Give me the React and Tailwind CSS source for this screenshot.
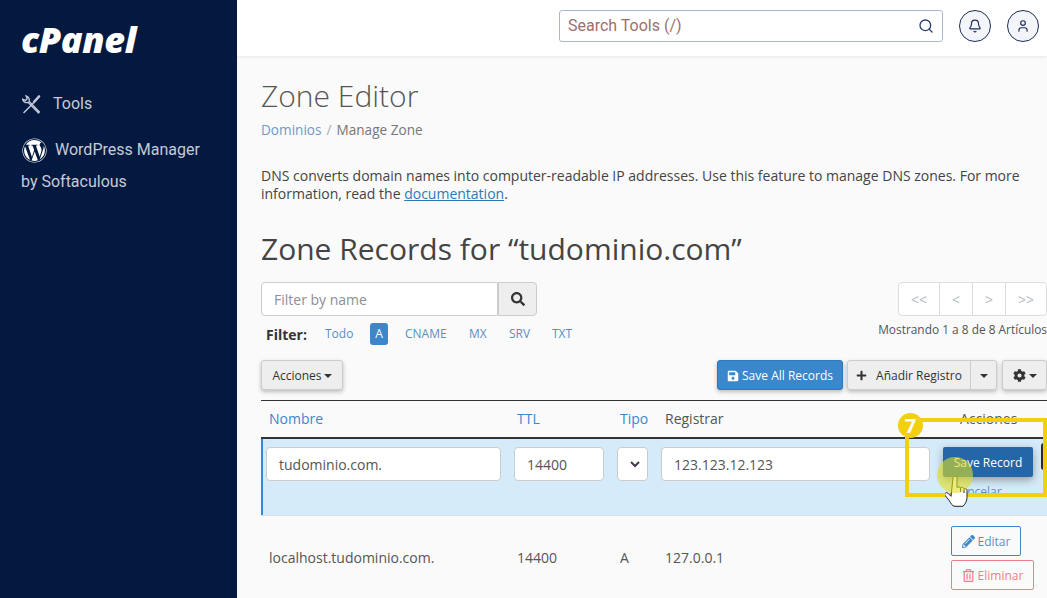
import React from 'react';
import { Bell, Search, User } from 'lucide-react';
import { FaWordpress, FaSave, FaSearch, FaPlus, FaCog, FaPencilAlt, FaRegTrashAlt } from 'react-icons/fa';

const ToolsIcon = () => (
    <svg width="20" height="20" viewBox="0 0 20 20" fill="none" stroke="#c5cbd8" strokeLinecap="round" className="shrink-0">
        <path d="M17.5 18L7 7.2c.7-2-.3-4.6-3-5.4l1.2 3-1.6 1.6-3-1.2c.6 2.8 3.4 3.9 5.4 3.1L16.5 19" strokeWidth="1.3" />
        <path d="M2 18.5l9-9" strokeWidth="1.5" />
        <path d="M12 8l5-5.5" strokeWidth="2.6" />
    </svg>
);

const HandCursor = () => (
    <svg width="24" height="34" viewBox="0 0 24 34" fill="#fff" stroke="#222" strokeWidth="1" className="absolute left-[708px] top-[475px]">
        <path d="M8 3c0-2 4-2 4 0v9.5c1-1 3-1 3.5.5 1-1 3-.8 3.5.8 1-.6 3-.2 3 1.5v7c0 4-2 7-4 9h-8c-3 0-4-3-6-6l-4-5c-1-2 1-3.5 3-2l3 3z" />
        <path d="M15.5 13v4M19 14v4" fill="none" />
    </svg>
);

const Sidebar = () => (
    <aside className="w-[237px] shrink-0 bg-[#04193f] pl-[22px] font-['Roboto',sans-serif] text-[16px] text-[#c5cbd8]">
        <div className="pt-[18px] h-[72px] -ml-px font-['Open_Sans',sans-serif] text-[36px] leading-[44px] font-extrabold italic tracking-[-0.4px] text-white">cPanel</div>
        <div className="mt-[20px] flex items-center gap-[11px] h-6">
            <ToolsIcon />
            <span>Tools</span>
        </div>
        <div className="mt-[22px] flex items-center gap-2 h-6">
            <FaWordpress className="text-white text-[25px] shrink-0" />
            <span>WordPress Manager</span>
        </div>
        <div className="mt-2 -ml-px leading-6">by Softaculous</div>
    </aside>
);

const TopBar = () => (
    <header className="h-[56px] bg-white shadow-[0_1px_3px_rgba(0,0,0,0.08)] flex items-center justify-end gap-[16px] pr-[8px] pb-[4px] shrink-0 relative">
        <div className="w-[384px] h-[32px] border border-[#a9b7d1] rounded-[3px] flex items-center justify-between pl-2 pr-[8px] font-['Roboto',sans-serif] text-[16px] text-[#9c6f6f]">
            <span>Search Tools (/)</span>
            <Search className="w-[16px] h-[16px] text-[#2b3f6b]" strokeWidth={2} />
        </div>
        <button className="w-8 h-8 rounded-full border border-[#1c2e5a] bg-[#f3f5fb] flex items-center justify-center">
            <Bell className="w-[14px] h-[14px] text-[#1c2e5a]" />
        </button>
        <button className="w-8 h-8 rounded-full border border-[#1c2e5a] bg-[#f3f5fb] flex items-center justify-center">
            <User className="w-[14px] h-[14px] text-[#1c2e5a]" />
        </button>
    </header>
);

const FilterBar = () => (
    <div className="flex justify-between mt-[12px]">
        <div>
            <div className="flex w-[276px] h-[34px]">
                <div className="flex-1 bg-white border border-[#ccc] rounded-l-[4px] pl-3 leading-[34px] text-[14px] text-[#8e8e93]">Filter by name</div>
                <div className="w-[39px] bg-[#eee] border border-l-[#ccc] border-[#ccc] rounded-r-[4px] flex items-center justify-center">
                    <FaSearch className="text-[14px] text-[#333]" />
                </div>
            </div>
            <div className="flex items-center h-[24px] mt-[6px] pl-[5px] text-[12px] text-[#5a8fc4]">
                <b className="text-[14px] text-[#333] w-[59px]">Filter:</b>
                <span className="w-[45px]">Todo</span>
                <span className="w-[18px] h-[22px] bg-[#3a87cc] text-white rounded-[3px] flex items-center justify-center mr-[17px]">A</span>
                <span className="w-[64px]">CNAME</span>
                <span className="w-[40px]">MX</span>
                <span className="w-[43px]">SRV</span>
                <span>TXT</span>
            </div>
        </div>
        <div className="flex flex-col items-end">
            <div className="flex h-[34px] bg-white border border-[#ddd] rounded-[4px] text-[14px] text-[#b4b9c6] divide-x divide-[#ddd]">
                <span className="w-[41px] flex items-center justify-center">&lt;&lt;</span>
                <span className="w-[33px] flex items-center justify-center">&lt;</span>
                <span className="w-[33px] flex items-center justify-center">&gt;</span>
                <span className="w-[40px] flex items-center justify-center">&gt;&gt;</span>
            </div>
            <div className="mt-[3px] text-[11.9px] leading-[20px] text-[#555] whitespace-nowrap">Mostrando 1 a 8 de 8 Artículos</div>
        </div>
    </div>
);

const ActionsBar = () => (
    <div className="flex justify-between mt-[14px] text-[12px] h-[30px]">
        <button className="w-[82px] pt-px bg-[#eee] border border-[#ccc] rounded-[3px] text-[#333] shadow-[0_2px_4px_rgba(0,0,0,0.25)] flex items-center justify-center gap-[2px]">
            Acciones <span className="border-x-[4px] border-x-transparent border-t-[4px] border-t-[#333]" />
        </button>
        <div className="flex">
            <button className="w-[126px] pt-px bg-[#3a87cc] border border-[#2f78bb] rounded-[3px] text-white shadow-[0_2px_4px_rgba(0,0,0,0.25)] flex items-center justify-center gap-[3px]">
                <FaSave className="text-[12px]" /> Save All Records
            </button>
            <div className="ml-[4px] flex bg-[#eee] border border-[#ccc] rounded-[3px] text-[#333] shadow-[0_2px_4px_rgba(0,0,0,0.25)]">
                <span className="w-[123px] pt-px flex items-center justify-center gap-[9px] border-r border-[#ccc]"><FaPlus className="text-[11px]" /> Añadir Registro</span>
                <span className="w-[25px] pt-px flex items-center justify-center"><span className="border-x-[4px] border-x-transparent border-t-[4px] border-t-[#333]" /></span>
            </div>
            <button className="ml-[5px] w-[45px] pt-px bg-[#eee] border border-[#ccc] rounded-[3px] text-[#333] shadow-[0_2px_4px_rgba(0,0,0,0.25)] flex items-center justify-center gap-[3px]">
                <FaCog className="text-[13px]" /><span className="border-x-[4px] border-x-transparent border-t-[4px] border-t-[#333]" />
            </button>
        </div>
    </div>
);

const fieldClass = "h-[34px] bg-white border border-[#ccc] rounded-[4px] text-[14px] leading-[34px] text-[#555]";
const gridClass = "grid grid-cols-[248px_103px_44px_279px_1fr]";

const RecordsTable = () => (
    <div className="mt-[10px] text-[14px]">
        <div className={`${gridClass} h-[39px] pb-[2px] border-t border-[#333] border-b-2 border-b-[#333] items-center`}>
            <span className="pl-2 text-[#3a87cc]">Nombre</span>
            <span className="pl-2 text-[#3a87cc]">TTL</span>
            <span className="pl-2 text-[#3a87cc]">Tipo</span>
            <span className="pl-[9px] text-[#555]">Registrar</span>
            <span className="pl-[25px] text-[#555]">Acciones</span>
        </div>
        <div className={`${gridClass} h-[77px] bg-[#d6ebf9] border-b border-[#d9dee2] shadow-[inset_2px_0_0_#3a87cc] pt-[8px]`}>
            <div className="pl-[5px]"><div className={`${fieldClass} w-[235px] pl-3`}>tudominio.com.</div></div>
            <div className="pl-[5px]"><div className={`${fieldClass} w-[90px] pl-3`}>14400</div></div>
            <div className="pl-[5px]">
                <div className={`${fieldClass} w-[31px] flex items-center justify-end pr-[7px]`}>
                    <svg width="10" height="7" viewBox="0 0 10 7" fill="none" stroke="#4a3550" strokeWidth="2"><path d="M1 1l4 4 4-4" /></svg>
                </div>
            </div>
            <div className="pl-[5px]"><div className={`${fieldClass} w-[269px] pl-3`}>123.123.12.123</div></div>
            <div className="pl-[8px] relative">
                <div className="w-[90px] h-[30px] bg-[#2566a8] rounded-[2px] text-white text-[12px] leading-[32px] text-center shadow-[0_3px_8px_rgba(0,0,0,0.35)]">Save Record</div>
                <div className="pl-[10px] mt-[5px] text-[12px] leading-[20px] text-[#5a8fc4]">Cancelar</div>
                <div className="absolute left-[106px] top-[-4px] w-[12px] h-[27px] bg-[#2b2b33] rounded-[3px]" />
            </div>
        </div>
        <div className={`${gridClass} h-[82px] items-center text-[#555]`}>
            <span className="pl-2">localhost.tudominio.com.</span>
            <span className="pl-2">14400</span>
            <span className="pl-2">A</span>
            <span className="pl-[9px]">127.0.0.1</span>
            <div className="pl-[16px] pt-[2px] text-[12px] flex flex-col gap-[4px] items-start">
                <span className="w-[70px] h-[30px] pt-px border border-[#3a87cc] rounded-[2px] text-[#5a8fc4] flex items-center justify-center gap-[3px]"><FaPencilAlt className="text-[13px] text-[#3a87cc]" /> Editar</span>
                <span className="w-[83px] h-[30px] pt-px border border-[#e9808d] rounded-[2px] text-[#e9808d] flex items-center justify-center gap-[3px]"><FaRegTrashAlt className="text-[13px]" /> Eliminar</span>
            </div>
        </div>
    </div>
);

const Callout = () => (
    <>
        <div className="absolute left-[668px] top-[418px] w-[142px] h-[79px] border-4 border-[#f2cf0f]" />
        <div className="absolute left-[661px] top-[413px] w-[25px] h-[25px] rounded-full bg-[#f2cf0f] text-white font-bold text-[20px] leading-[25px] text-center">7</div>
        <HandCursor />
        <div className="absolute left-[700px] top-[457px] w-[36px] h-[36px] rounded-full bg-[#e0e020]/60" />
    </>
);

export default function App() {
    return (
        <div className="flex w-[1047px] h-[598px] overflow-hidden bg-[#fafafa] font-['Open_Sans',sans-serif]">
            <Sidebar />
            <div className="flex-1 flex flex-col relative min-w-0">
                <TopBar />
                <main className="pl-[24px] flex-1 min-w-0">
                    <h1 className="mt-[19px] text-[30px] leading-[42px] text-[#555] font-light">Zone Editor</h1>
                    <div className="mt-[3px] text-[13.6px] leading-[20px] text-[#777]">
                        <span className="text-[#6c9cc9]">Dominios</span>
                        <span className="text-[#aaa] px-[5px]">/</span>
                        Manage Zone
                    </div>
                    <p className="mt-[27px] text-[14px] leading-[18px] text-[#444]">
                        DNS converts domain names into computer-readable IP addresses. Use this feature to manage DNS zones. For more information, read the <span className="text-[#2a7ab8] underline">documentation</span>.
                    </p>
                    <h2 className="mt-[25px] text-[30px] leading-[42px] text-[#444]">Zone Records for “tudominio.com”</h2>
                    <FilterBar />
                    <ActionsBar />
                    <RecordsTable />
                </main>
                <Callout />
            </div>
        </div>
    );
}
